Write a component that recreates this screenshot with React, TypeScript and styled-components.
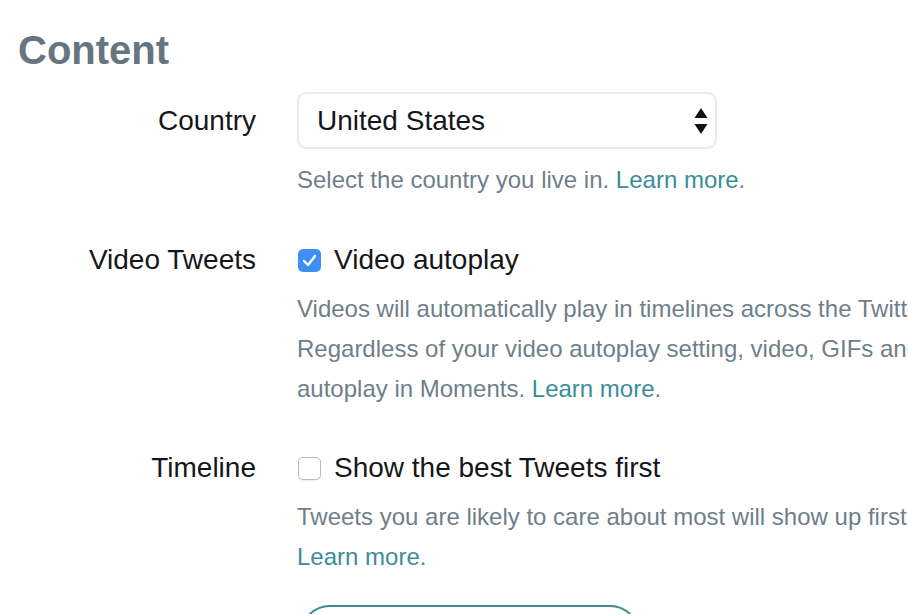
import styled, { createGlobalStyle } from 'styled-components';

const GlobalStyle = createGlobalStyle`
  html, body {
    margin: 0;
    padding: 0;
    background: #ffffff;
    overflow: hidden;
  }
  body {
    font-family: "Liberation Sans", Arial, sans-serif;
  }
`;

function UpDownArrows() {
  return (
    <svg width="14" height="26" viewBox="0 0 14 26">
      <path d="M7 0 L13.5 10 L0.5 10 Z" fill="#111" />
      <path d="M7 26 L13.5 16 L0.5 16 Z" fill="#111" />
    </svg>
  );
}

function Check() {
  return (
    <svg width="15" height="13" viewBox="0 0 15 13">
      <path
        d="M2 7 L6 11 L13 2"
        fill="none"
        stroke="#fff"
        strokeWidth="2.4"
        strokeLinecap="round"
        strokeLinejoin="round"
      />
    </svg>
  );
}

function App() {
  return (
    <Page>
      <GlobalStyle />
      <Title>Content</Title>

      <Row $gap={40}>
        <Label $offset={8.5}>Country</Label>
        <Controls>
          <Select>
            <span>United States</span>
            <UpDownArrows />
          </Select>
          <Help $top={11}>
            Select the country you live in. <Link>Learn more</Link>.
          </Help>
        </Controls>
      </Row>

      <Row $gap={39}>
        <Label>Video Tweets</Label>
        <Controls>
          <CheckRow>
            <Box $checked>
              <Check />
            </Box>
            Video autoplay
          </CheckRow>
          <Help>
            Videos will automatically play in timelines across the Twitter website.
            <br />
            Regardless of your video autoplay setting, video, GIFs and Vines will always
            <br />
            autoplay in Moments. <Link>Learn more</Link>.
          </Help>
        </Controls>
      </Row>

      <Row $gap={28}>
        <Label>Timeline</Label>
        <Controls>
          <CheckRow>
            <Box />
            Show the best Tweets first
          </CheckRow>
          <Help>
            Tweets you are likely to care about most will show up first in your timeline.
            <br />
            <Link>Learn more</Link>.
          </Help>
        </Controls>
      </Row>

      <Row>
        <Label />
        <Controls>
          <OutlineButton>Save changes</OutlineButton>
        </Controls>
      </Row>
    </Page>
  );
}

export default App;

const Page = styled.div`
  width: 1400px;
  padding-top: 30px;
`;

const Title = styled.h1`
  margin: 0 0 22px 18px;
  font-size: 40px;
  line-height: 40px;
  font-weight: 700;
  color: #66757f;
`;

const Row = styled.div<{ $gap?: number }>`
  display: flex;
  align-items: flex-start;
  margin-bottom: ${({ $gap }) => $gap ?? 0}px;
`;

const Label = styled.div<{ $offset?: number }>`
  width: 256px;
  flex: none;
  padding-top: ${({ $offset }) => $offset ?? 0}px;
  text-align: right;
  font-size: 28px;
  line-height: 40px;
  color: #14171a;
`;

const Controls = styled.div`
  margin-left: 41px;
  display: flex;
  flex-direction: column;
`;

const Select = styled.div`
  box-sizing: border-box;
  width: 420px;
  height: 57px;
  padding: 0 7px 0 18px;
  display: flex;
  align-items: center;
  justify-content: space-between;
  border: 2px solid #e6ecf0;
  border-radius: 9px;
  font-size: 28px;
  color: #14171a;
  background: #fff;
`;

const Help = styled.p<{ $top?: number }>`
  margin: ${({ $top }) => $top ?? 9}px 0 0;
  font-size: 24px;
  line-height: 40px;
  color: #6e7f8b;
  white-space: nowrap;
`;

const Link = styled.a`
  color: #3b8d99;
  text-decoration: none;
  cursor: pointer;
`;

const CheckRow = styled.label`
  display: flex;
  align-items: center;
  gap: 13px;
  font-size: 28px;
  line-height: 40px;
  color: #14171a;
`;

const Box = styled.span<{ $checked?: boolean }>`
  box-sizing: border-box;
  width: 23px;
  height: 23px;
  margin: 1px 0 0 1px;
  display: inline-flex;
  align-items: center;
  justify-content: center;
  border-radius: 5px;
  background: ${({ $checked }) => ($checked ? '#3d8ff2' : '#fff')};
  border: ${({ $checked }) => ($checked ? 'none' : '1.5px solid #b8b8b8')};
  box-shadow: ${({ $checked }) => ($checked ? 'none' : '0 1px 1px rgba(0,0,0,0.06)')};
`;

const OutlineButton = styled.button`
  box-sizing: border-box;
  width: 340px;
  height: 60px;
  margin-left: 3px;
  border: 2px solid #3f8896;
  border-radius: 30px;
  background: #fff;
  color: #3f8896;
  font-family: inherit;
  font-size: 28px;
  font-weight: 700;
`;
